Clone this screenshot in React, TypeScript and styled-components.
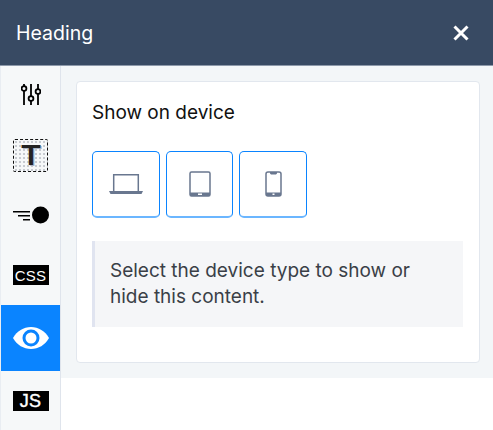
import styled, { createGlobalStyle } from 'styled-components';

const tabs = ['settings', 'text', 'motion', 'css', 'eye', 'js'] as const;
type TabName = (typeof tabs)[number];

const TabIcon = ({ name }: { name: TabName }) => {
  if (name === 'settings') {
    return (
      <svg width="20" height="24" viewBox="0 0 20 24" fill="none" stroke="#000" strokeWidth="1.800">
        <path d="M3 1v2M3 8v14M10 1v12M10 18v4M17 1v5M17 11v11" />
        <circle cx="3" cy="5.500" r="2.400" />
        <circle cx="10" cy="15.500" r="2.400" />
        <circle cx="17" cy="8.500" r="2.400" />
      </svg>
    );
  }
  if (name === 'text') {
    return (
      <TextBadge>
        <TextGlyph>T</TextGlyph>
      </TextBadge>
    );
  }
  if (name === 'motion') {
    return (
      <svg width="36" height="18" viewBox="0 0 36 18" fill="#000">
        <path d="M0 5h17v1.500H0zM5 9h12v1.500H5zM10 13h7v1.500h-7z" />
        <circle cx="27.500" cy="9" r="8.500" />
      </svg>
    );
  }
  if (name === 'eye') {
    return (
      <svg width="36" height="22" viewBox="0 0 36 22">
        <path fill="#fff" d="M0 11C4 4 10.500 0 18 0s14 4 18 11c-4 7-10.500 11-18 11S4 18 0 11z" />
        <circle cx="18" cy="11" r="8.500" fill="#0a84ff" />
        <circle cx="18" cy="11" r="5.500" fill="#fff" />
      </svg>
    );
  }
  return <CodeBadge $large={name === 'js'}>{name === 'css' ? 'CSS' : 'JS'}</CodeBadge>;
};

const LaptopIcon = () => (
  <svg width="34" height="22" viewBox="0 0 34 22" fill="none">
    <path stroke="#69778f" strokeWidth="1.500" d="M4.700 18V1.700h24.600V18" />
    <path fill="#69778f" d="M0 18h34l-1.500 3h-31z" />
  </svg>
);

const TabletIcon = () => (
  <svg width="22" height="26" viewBox="0 0 22 26" fill="none">
    <rect x="1" y="1" width="20" height="24" rx="1.500" stroke="#69778f" strokeWidth="1.500" />
    <path fill="#69778f" d="M1 21.500h20V25H1z" />
    <rect x="9" y="22.500" width="4" height="1.500" fill="#fff" />
  </svg>
);

const PhoneIcon = () => (
  <svg width="17" height="26" viewBox="0 0 17 26" fill="none">
    <rect x="1" y="1" width="15" height="24" rx="2" stroke="#69778f" strokeWidth="1.500" />
    <path fill="#69778f" d="M1 21.500h15V25H1zM5 1h7v1.500l-1 1H6l-1-1z" />
    <rect x="7.500" y="22.500" width="2" height="1.500" fill="#fff" />
  </svg>
);

const App = () => {
  return (
    <Root>
      <GlobalStyle />
      <Header>
        <HeaderTitle>Heading</HeaderTitle>
        <svg width="16" height="16" viewBox="0 0 16 16" stroke="#fff" strokeWidth="3">
          <path d="M1.500 1.500l13 13M14.500 1.500l-13 13" />
        </svg>
      </Header>
      <Body>
        <Sidebar>
          {tabs.map((tab) => (
            <Tab key={tab} $active={tab === 'eye'}>
              <TabIcon name={tab} />
            </Tab>
          ))}
        </Sidebar>
        <Content>
          <Card>
            <CardTitle>Show on device</CardTitle>
            <DeviceRow>
              <DeviceButton><LaptopIcon /></DeviceButton>
              <DeviceButton><TabletIcon /></DeviceButton>
              <DeviceButton><PhoneIcon /></DeviceButton>
            </DeviceRow>
            <InfoBox>Select the device type to show or hide this content.</InfoBox>
          </Card>
        </Content>
      </Body>
    </Root>
  );
};

const GlobalStyle = createGlobalStyle`
  html, body {
    margin: 0;
    background: #fff;
  }
`;

const Root = styled.div`
  width: 493px;
  height: 430px;
  overflow: hidden;
  font-family: 'Inter', 'Noto Sans', sans-serif;
`;

const Header = styled.div`
  position: relative;
  height: 65px;
  box-sizing: border-box;
  display: flex;
  align-items: center;
  justify-content: space-between;
  padding: 0 24px 0 16px;
  background: #384a63;
  box-shadow: 0 1px 0 #8d99aa;
`;

const HeaderTitle = styled.div`
  color: #fff;
  font-size: 19.500px;
  font-weight: 400;
`;

const Body = styled.div`
  display: flex;
  align-items: flex-start;
`;

const Sidebar = styled.div`
  width: 61px;
  height: 365px;
  box-sizing: border-box;
  flex-shrink: 0;
  background: #f6f8f9;
  border-left: 1px solid #e9edf2;
  border-right: 1px solid #dfe4ec;
`;

const Tab = styled.div<{ $active: boolean }>`
  height: ${(props) => (props.$active ? '66px' : '60px')};
  display: flex;
  align-items: center;
  justify-content: center;
  background: ${(props) => (props.$active ? '#0a84ff' : 'transparent')};
`;

const TextBadge = styled.div`
  width: 35px;
  height: 33px;
  box-sizing: border-box;
  display: flex;
  align-items: center;
  justify-content: center;
  border: 1.5px dashed #111;
  border-radius: 2px;
  background: radial-gradient(#c3c7cd 0.7px, transparent 0.8px) 0 0 / 4px 4px;
`;

const TextGlyph = styled.span`
  font-family: 'Inter', sans-serif;
  font-size: 27px;
  line-height: 1;
  font-weight: 600;
  color: #222;
  text-shadow: 1px 1px 0 #a9b4c6;
  transform: scaleX(1.200);
`;

const CodeBadge = styled.div<{ $large: boolean }>`
  width: 36px;
  height: 20px;
  display: flex;
  align-items: center;
  justify-content: center;
  background: #000;
  color: #fff;
  font-family: 'Liberation Sans', sans-serif;
  font-size: ${(props) => (props.$large ? '18px' : '15px')};
  -webkit-text-stroke: ${(props) => (props.$large ? '0.4px #fff' : '0')};
  letter-spacing: 0.3px;
`;

const Content = styled.div`
  flex: 1;
  height: 313px;
  box-sizing: border-box;
  padding: 16px 13px 15px 15px;
  background: #f3f6f8;
`;

const Card = styled.div`
  height: 282px;
  box-sizing: border-box;
  padding: 20px 16px 0 15px;
  background: #fff;
  border: 1px solid #e2e7ee;
  border-radius: 4px;
`;

const CardTitle = styled.div`
  font-size: 19px;
  line-height: 22px;
  color: #111;
`;

const DeviceRow = styled.div`
  display: flex;
  gap: 6px;
  margin-top: 27px;
`;

const DeviceButton = styled.div`
  width: 68px;
  height: 67px;
  box-sizing: border-box;
  display: flex;
  align-items: center;
  justify-content: center;
  border: 1px solid #0a84ff;
  border-bottom: 2px solid #6bb6ff;
  border-radius: 5px;
  &:nth-child(2) {
    width: 67px;
  }
`;

const InfoBox = styled.div`
  margin-top: 23px;
  height: 86px;
  box-sizing: border-box;
  padding: 17px 50px 0 15px;
  background: #f5f6f8;
  border-left: 3px solid #e0e4f0;
  color: #3a3f47;
  font-size: 19px;
  line-height: 26px;
`;

export default App;
